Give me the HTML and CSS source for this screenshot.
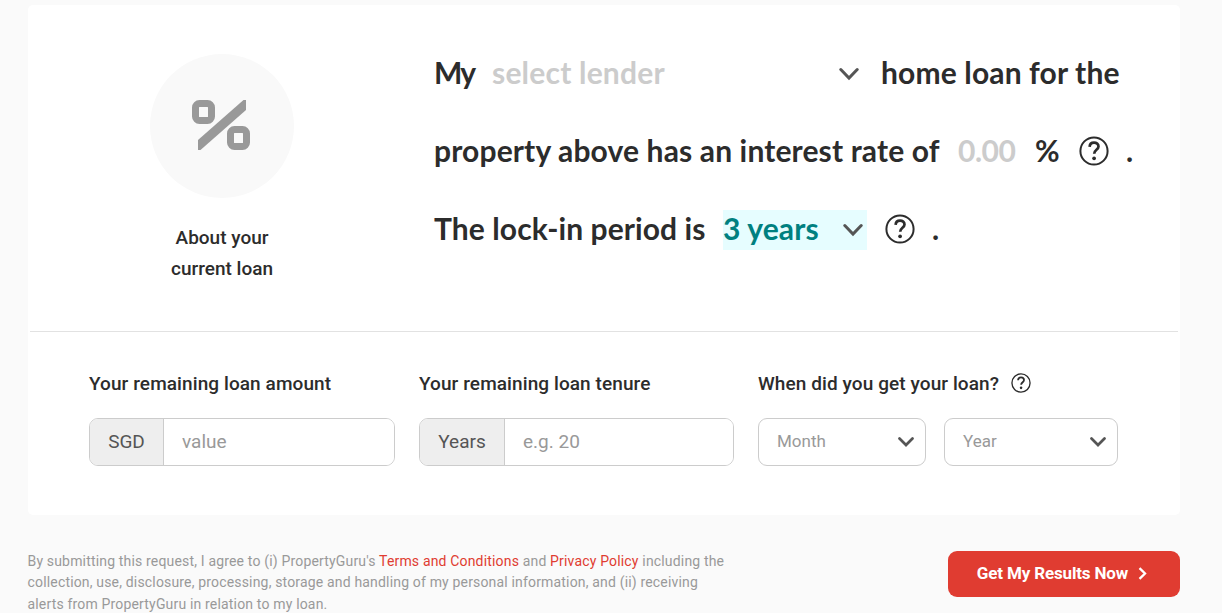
FILE: index.html
```html
<!DOCTYPE html>
<html lang="en">
<head>
    <meta charset="UTF-8">
    <meta name="viewport" content="width=device-width, initial-scale=1.0">
    <title>Refinance - Your Current Loan</title>
    <link rel="stylesheet" href="styles.css">
</head>
<body>
    <svg class="sprite" width="0" height="0">
        <symbol id="chevron" viewBox="0 0 20 14">
            <path d="M1.800 2.500l8.200 8.500 8.200-8.500" fill="none" stroke="#555" stroke-width="3" stroke-linecap="round"/>
        </symbol>
        <symbol id="chevron-small" viewBox="0 0 16 10">
            <path d="M1.500 1.500l6.500 6.500 6.500-6.500" fill="none" stroke="#555" stroke-width="2.700" stroke-linecap="round"/>
        </symbol>
        <symbol id="help" viewBox="0 0 30 30">
            <circle cx="15" cy="15" r="13.600" fill="none" stroke="#2c2c2c" stroke-width="2"/>
            <path d="M10.600 10.800C10.800 8 12.600 6.600 15 6.600c2.500 0 4.500 1.500 4.500 3.900 0 3.400-4.300 3.300-4.300 7.300" fill="none" stroke="#2c2c2c" stroke-width="2.700"/>
            <circle cx="15.100" cy="22.300" r="1.900" fill="#2c2c2c"/>
        </symbol>
    </svg>

    <div class="card">
        <div class="loan">
            <div class="about">
                <div class="about-icon">
                    <svg width="58" height="50" viewBox="0 0 58 50">
                        <rect x="3.500" y="3.500" width="16" height="17" rx="4" fill="none" stroke="#999" stroke-width="7"/>
                        <rect x="38.500" y="29.500" width="16" height="17" rx="4" fill="none" stroke="#999" stroke-width="7"/>
                        <path d="M54 0v10L8.500 50H6V40L51.500 0z" fill="#999"/>
                    </svg>
                </div>
                <p>About your<br>current loan</p>
            </div>
            <div class="sentence">
                <div class="line">
                    <span class="my">My</span>
                    <div class="pick lender">
                        <span>select lender</span>
                        <svg class="chevron"><use href="#chevron"/></svg>
                    </div>
                    <span class="home">home loan for the</span>
                </div>
                <div class="line">
                    <span class="rate-text">property above has an interest rate of</span>
                    <span class="rate">0.00</span>
                    <span class="percent">%</span>
                    <svg class="help"><use href="#help"/></svg>
                    <span class="dot">.</span>
                </div>
                <div class="line">
                    <span class="lock-text">The lock-in period is</span>
                    <div class="pick period">
                        <span>3 years</span>
                        <svg class="chevron"><use href="#chevron"/></svg>
                    </div>
                    <svg class="help"><use href="#help"/></svg>
                    <span class="dot">.</span>
                </div>
            </div>
        </div>

        <form class="details">
            <div class="form-group">
                <label for="amount">Your remaining loan amount</label>
                <div class="input-group">
                    <span class="addon">SGD</span>
                    <input type="text" id="amount" name="amount" placeholder="value">
                </div>
            </div>
            <div class="form-group">
                <label for="tenure">Your remaining loan tenure</label>
                <div class="input-group">
                    <span class="addon years">Years</span>
                    <input type="text" id="tenure" name="tenure" placeholder="e.g. 20">
                </div>
            </div>
            <div class="form-group">
                <label>When did you get your loan? <svg class="help small"><use href="#help"/></svg></label>
                <div class="dates">
                    <div class="select">Month <svg class="chevron small"><use href="#chevron-small"/></svg></div>
                    <div class="select">Year <svg class="chevron small"><use href="#chevron-small"/></svg></div>
                </div>
            </div>
        </form>
    </div>

    <div class="submit">
        <p>By submitting this request, I agree to (i) PropertyGuru's <a href="#">Terms and Conditions</a> and <a href="#">Privacy Policy</a> including the<br>collection, use, disclosure, processing, storage and handling of my personal information, and (ii) receiving<br>alerts from PropertyGuru in relation to my loan.</p>
        <button type="button">
            Get My Results Now
            <svg width="9" height="13" viewBox="0 0 9 13"><path d="M1.500 1.200l5.500 5.300-5.500 5.300" fill="none" stroke="#fff" stroke-width="2.300"/></svg>
        </button>
    </div>
</body>
</html>
```
FILE: styles.css
```css
body {
    margin: 0;
    padding: 5px 42px 0 28px;
    background: #fafafa;
    color: #2c2c2c;
    font-family: Roboto, Arial, sans-serif;
    overflow: hidden;
}
.sprite {
    display: block;
}
.card {
    height: 510px;
    background: #fff;
    border-radius: 5px;
}
.loan {
    display: flex;
    height: 326px;
    margin: 0 2px;
    border-bottom: 1px solid #e2e2e2;
}
.about {
    width: 384px;
    padding-top: 49px;
    text-align: center;
}
.about-icon {
    display: flex;
    align-items: center;
    justify-content: center;
    width: 144px;
    height: 144px;
    margin: 0 auto;
    padding: 0 2px 2px 0;
    border-radius: 50%;
    box-sizing: border-box;
    background: #f9f9f9;
}
.about p {
    margin: 24px 0 0;
    font-size: 19px;
    font-weight: 500;
    line-height: 31px;
}
.sentence {
    padding: 29px 0 0 20px;
    font-family: Lato, sans-serif;
    font-size: 30px;
    font-weight: 700;
    letter-spacing: 0.14px;
    white-space: nowrap;
}
.line {
    display: flex;
    align-items: center;
    height: 78px;
}
.line span {
    padding-bottom: 2px;
    box-sizing: border-box;
}
.my {
    width: 58px;
    letter-spacing: -1.800px;
}
.pick {
    display: flex;
    align-items: center;
    justify-content: space-between;
    height: 40px;
}
.lender {
    width: 367px;
    color: #ccc;
    letter-spacing: 0.2px;
}
.home {
    margin-left: 22px;
}
.rate-text {
    width: 524px;
}
.rate {
    width: 77px;
    color: #ccc;
    letter-spacing: -0.500px;
}
.percent {
    width: 44px;
}
.help {
    width: 30px;
    height: 30px;
}
.dot {
    margin-left: 17px;
}
.lock-text {
    width: 289px;
    letter-spacing: 0.080px;
}
.period {
    width: 144px;
    margin: 2px 18px 0 0;
    padding: 0 4px 2px 0;
    box-sizing: border-box;
    background: #e6fdff;
    color: #008080;
}
.chevron {
    width: 20px;
    height: 14px;
    margin-top: 2px;
}
.details {
    display: grid;
    grid-template-columns: 306px 315px 360px;
    gap: 24px;
    padding: 39px 0 0 61px;
}
.form-group label {
    display: flex;
    align-items: center;
    height: 24px;
    margin-bottom: 23px;
    font-size: 19px;
    font-weight: 500;
    letter-spacing: 0.090px;
}
.input-group {
    display: flex;
    height: 48px;
    border: 1px solid #ccc;
    border-radius: 9px;
    box-sizing: border-box;
    overflow: hidden;
}
.addon {
    width: 73px;
    border-right: 1px solid #ccc;
    background: #eee;
    color: #555;
    font-size: 19px;
    line-height: 45px;
    text-align: center;
}
.years {
    width: 84px;
}
.input-group input {
    flex: 1;
    min-width: 0;
    padding: 0 18px 2px;
    border: 0;
    background: #fff;
    font-family: inherit;
    font-size: 19px;
}
.input-group input::placeholder {
    color: #999;
}
.help.small {
    width: 20px;
    height: 20px;
    margin-left: 12px;
}
.dates {
    display: grid;
    grid-template-columns: 168px 174px;
    gap: 18px;
}
.select {
    display: flex;
    align-items: center;
    justify-content: space-between;
    height: 48px;
    padding: 0 11px 2px 18px;
    border: 1px solid #ccc;
    border-radius: 9px;
    box-sizing: border-box;
    color: #999;
    font-size: 17px;
}
.chevron.small {
    width: 16px;
    height: 10px;
}
.submit {
    display: flex;
    justify-content: space-between;
    align-items: flex-start;
    padding-top: 36px;
}
.submit p {
    margin: 0 0 0 -0.500px;
    color: #999;
    font-size: 14px;
    letter-spacing: 0.170px;
    line-height: 21.300px;
    white-space: nowrap;
}
.submit a {
    color: #e03c31;
    text-decoration: none;
}
.submit button {
    display: flex;
    align-items: center;
    justify-content: center;
    gap: 10px;
    width: 232px;
    height: 46px;
    padding: 0 4px 2px 0;
    border: 0;
    border-radius: 9px;
    background: #e03c31;
    color: #fff;
    font-family: inherit;
    font-size: 17px;
    font-weight: 700;
    letter-spacing: -0.150px;
}
```
